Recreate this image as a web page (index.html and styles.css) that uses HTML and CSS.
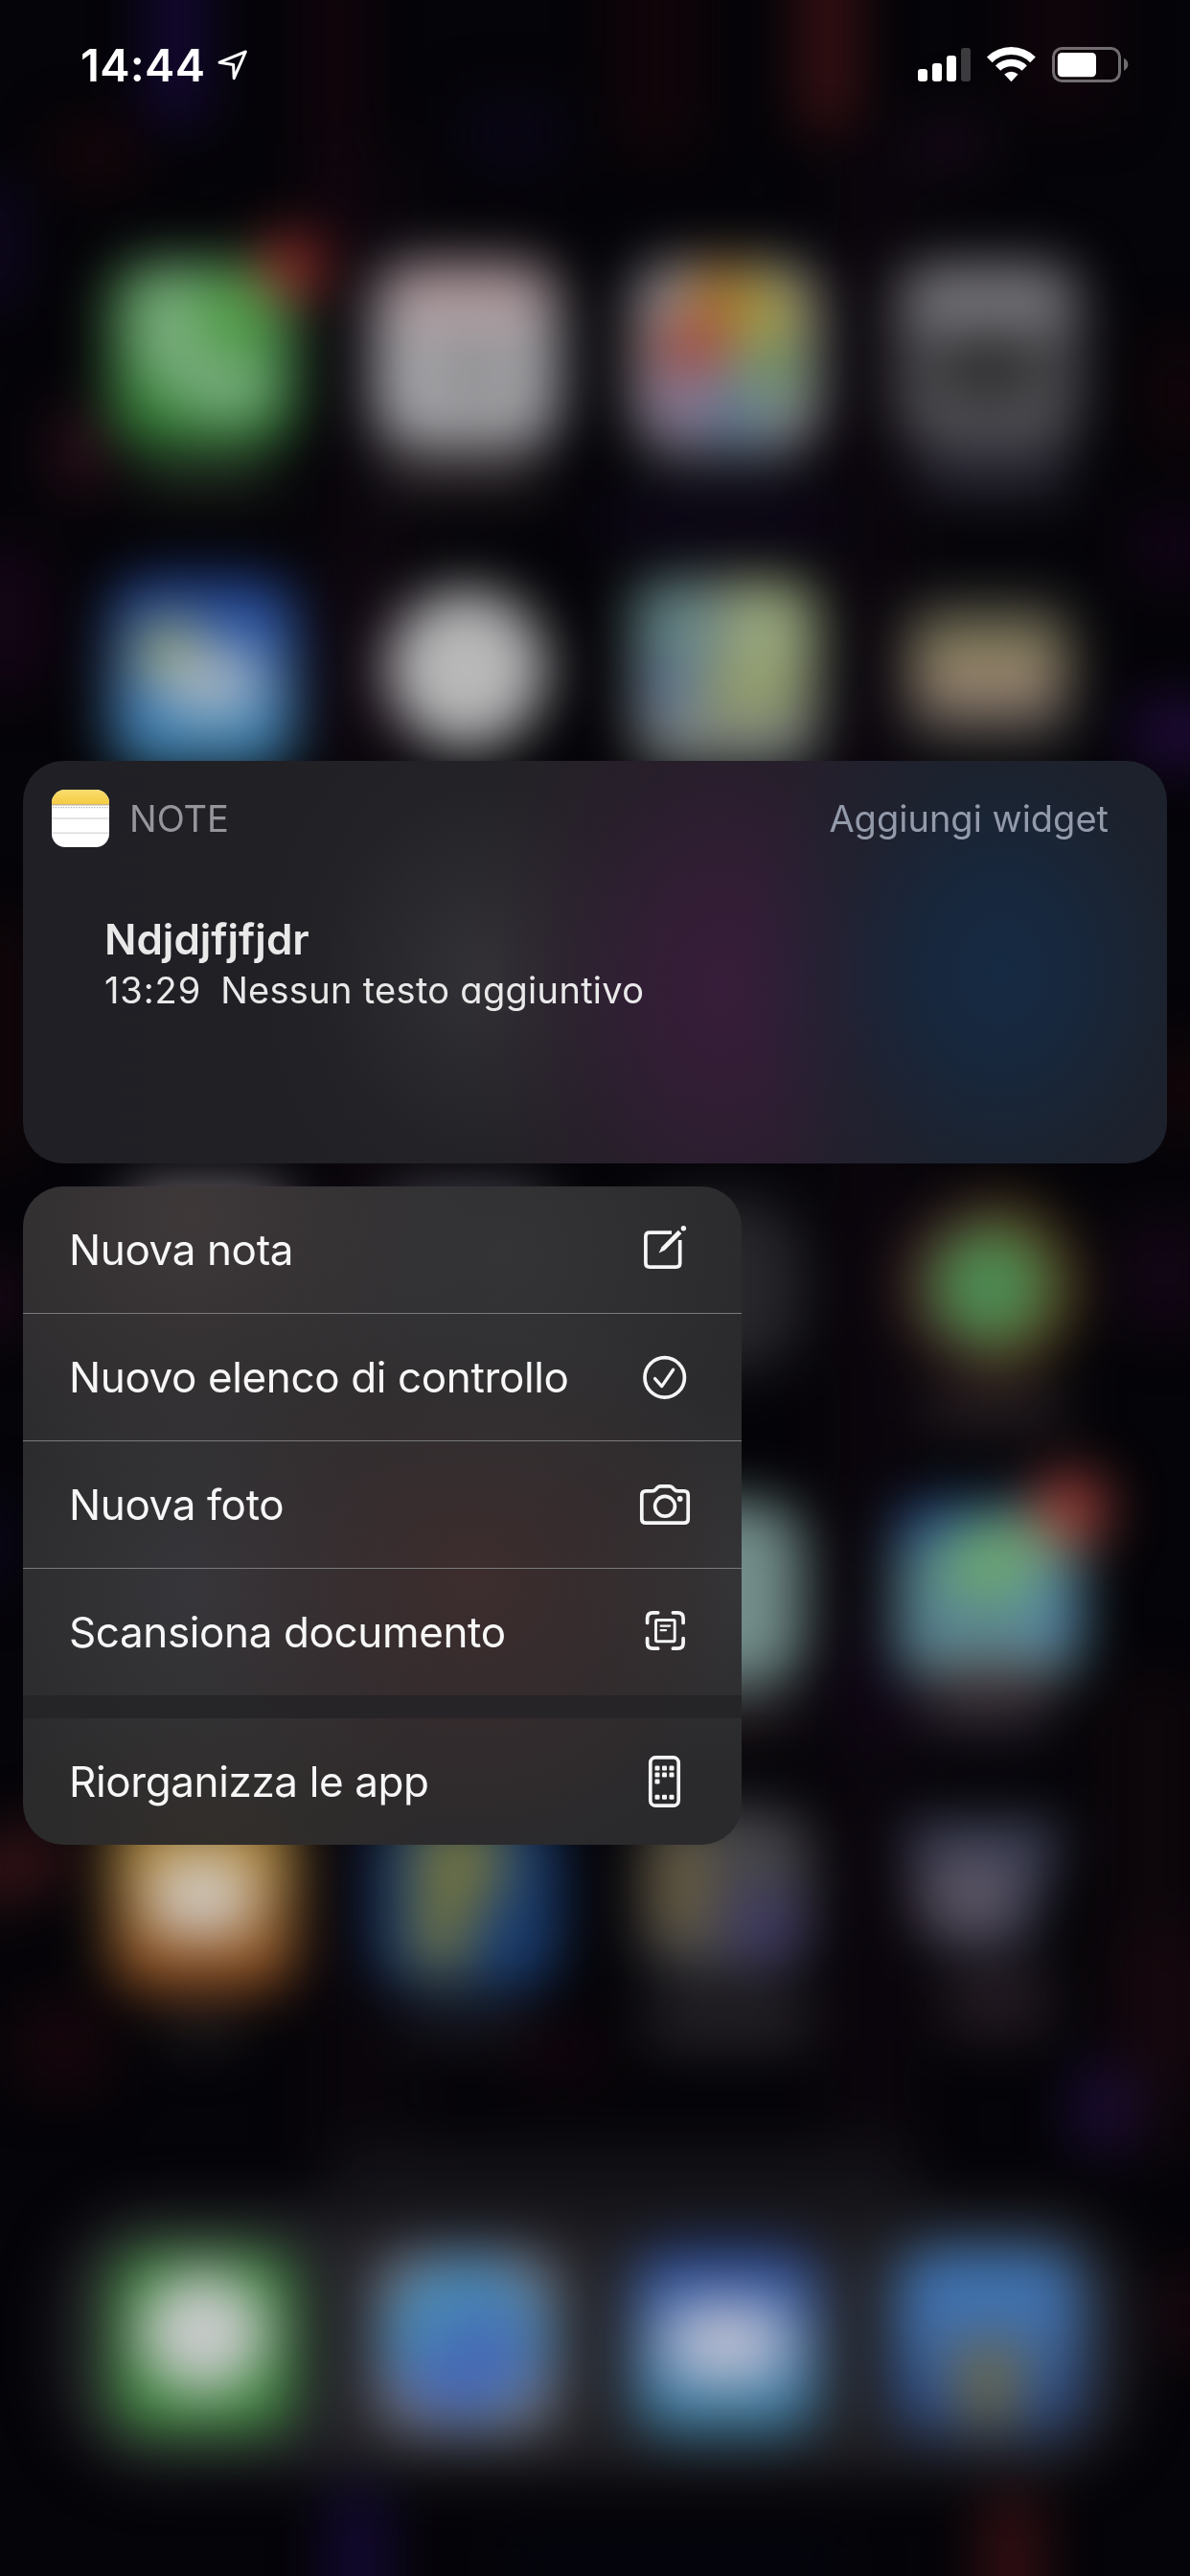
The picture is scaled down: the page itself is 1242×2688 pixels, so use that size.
FILE: index.html
```html
<!DOCTYPE html>
<html lang="it">
<head>
<meta charset="utf-8">
<title>Note</title>
<link rel="stylesheet" href="styles.css">
</head>
<body>
<div class="screen">
  <svg class="wallpaper" viewBox="0 0 1242 2688" aria-hidden="true">
    <defs>
      <filter id="soft" filterUnits="userSpaceOnUse" x="-150" y="-150" width="1542" height="2988" color-interpolation-filters="sRGB"><feGaussianBlur stdDeviation="28"/></filter>
      <linearGradient id="weather" x2="0" y2="1"><stop offset="0" stop-color="#1d3c8c"/><stop offset=".5" stop-color="#3e70b4"/><stop offset="1" stop-color="#3f8ab0"/></linearGradient>
      <linearGradient id="orange" x2="0" y2="1"><stop offset=".2" stop-color="#b0883c"/><stop offset="1" stop-color="#84441c"/></linearGradient>
      <linearGradient id="mail" x2="0" y2="1"><stop offset="0" stop-color="#254290"/><stop offset=".5" stop-color="#5a84b8"/><stop offset="1" stop-color="#327898"/></linearGradient>
      <linearGradient id="phone" x2="0" y2="1"><stop offset="0" stop-color="#5a9a5c"/><stop offset="1" stop-color="#2c7a2e"/></linearGradient>
      <linearGradient id="blue" x2="0" y2="1"><stop offset="0" stop-color="#3d74b2"/><stop offset=".4" stop-color="#4270ac"/><stop offset="1" stop-color="#264078"/></linearGradient>
    </defs>
    <rect width="1242" height="2688" fill="#050408"/>
    <g filter="url(#soft)">
      <!-- wallpaper streaks -->
      <g opacity=".8">
      <rect x="155" y="-100" width="60" height="230" fill="#190b40"/>
      <rect x="325" y="-60" width="50" height="320" fill="#18060e"/>
      <rect x="640" y="-80" width="90" height="240" fill="#14060a"/>
      <rect x="835" y="-100" width="60" height="235" fill="#471417"/>
      <rect x="1060" y="-60" width="100" height="180" fill="#12060c"/>
      <rect x="480" y="100" width="110" height="80" fill="#0a0718"/>
      <rect x="60" y="130" width="80" height="60" fill="#1c070c"/>
      <rect x="950" y="120" width="80" height="60" fill="#1a0a1c"/>
      <rect x="-40" y="190" width="60" height="130" fill="#120828"/>
      <rect x="60" y="430" width="50" height="80" fill="#3a1422"/>
      <rect x="-40" y="570" width="90" height="150" fill="#18061a"/>
      <rect x="1180" y="530" width="90" height="80" fill="#14061a"/>
      <rect x="1180" y="730" width="110" height="70" fill="#230c40"/>
      <rect x="1200" y="350" width="60" height="120" fill="#16060a"/>
      <rect x="620" y="520" width="260" height="50" fill="#10081c"/>
      <rect x="350" y="560" width="60" height="230" fill="#120812"/>
      <rect x="-40" y="960" width="70" height="250" fill="#16070b"/>
      <rect x="1200" y="1090" width="70" height="90" fill="#18080c"/>
      <rect x="-40" y="1320" width="60" height="70" fill="#240a1e"/>
      <rect x="1170" y="1270" width="90" height="120" fill="#170819"/>
      <rect x="-50" y="1560" width="60" height="100" fill="#0a0820"/>
      <rect x="860" y="1700" width="100" height="130" fill="#100717"/>
      <rect x="-40" y="1910" width="110" height="70" fill="#3c161a" transform="rotate(-20 20 1945)"/>
      <rect x="1170" y="2020" width="100" height="150" fill="#16070f"/>
      <rect x="20" y="2090" width="90" height="90" fill="#1c080e"/>
      <rect x="1120" y="2155" width="70" height="90" fill="#210f45"/>
      <rect x="540" y="2110" width="90" height="60" fill="#16060e"/>
      <rect x="340" y="2600" width="68" height="180" fill="#170c3c"/>
      <rect x="1025" y="2605" width="62" height="180" fill="#421317"/>
      <rect x="520" y="2640" width="360" height="80" fill="#04050f"/>
      <rect x="1210" y="2370" width="60" height="90" fill="#1e0a12"/>
      </g>
      <g opacity=".35">
      <rect x="320" y="150" width="120" height="2100" fill="#120a10"/>
      <rect x="860" y="150" width="100" height="2100" fill="#140a14"/>
      <rect x="1150" y="1750" width="110" height="500" fill="#1c0c12"/>
      </g>

      <!-- dock -->
      <rect x="62" y="2304" width="1118" height="276" rx="100" fill="#222227"/>
      <rect x="340" y="2240" width="620" height="90" rx="40" fill="#141318"/>

      <!-- row 1 -->
      <rect x="145" y="470" width="140" height="45" fill="#20281f"/>
      <rect x="116" y="274" width="192" height="192" rx="40" fill="url(#phone)"/>
      <ellipse cx="180" cy="345" rx="38" ry="62" fill="#7cae80"/><ellipse cx="235" cy="405" rx="54" ry="34" fill="#79ac7e"/>
      <ellipse cx="240" cy="330" rx="34" ry="45" fill="#4e9c45"/>
      <circle cx="304" cy="279" r="36" fill="#8c2c27"/>
      <rect x="400" y="470" width="165" height="45" fill="#2c2629"/>
      <rect x="391" y="274" width="192" height="192" rx="40" fill="#a6a6aa"/>
      <rect x="400" y="274" width="176" height="66" rx="30" fill="#ae999d"/><ellipse cx="495" cy="390" rx="50" ry="35" fill="#909093"/>
      <rect x="670" y="470" width="170" height="30" fill="#202028"/>
      <rect x="662" y="274" width="192" height="192" rx="40" fill="#99979e"/>
      <ellipse cx="755" cy="317" rx="38" ry="40" fill="#ab7020"/><ellipse cx="802" cy="330" rx="34" ry="44" fill="#a09a44"/>
      <ellipse cx="722" cy="362" rx="40" ry="34" fill="#a0483d"/><ellipse cx="805" cy="390" rx="34" ry="34" fill="#689060"/>
      <ellipse cx="718" cy="420" rx="40" ry="36" fill="#84708f"/><ellipse cx="770" cy="435" rx="34" ry="34" fill="#5f7a94"/>
      <rect x="960" y="460" width="155" height="60" fill="#262430"/>
      <rect x="936" y="274" width="192" height="192" rx="40" fill="#515155"/>
      <rect x="940" y="276" width="184" height="66" rx="30" fill="#77767b"/><ellipse cx="1032" cy="382" rx="60" ry="34" fill="#2c2c2e"/>

      <!-- row 2 -->
      <rect x="116" y="602" width="192" height="200" rx="40" fill="url(#weather)"/>
      <circle cx="178" cy="682" r="36" fill="#98a262"/><ellipse cx="220" cy="712" rx="56" ry="38" fill="#a4b4c2"/>
      <circle cx="487" cy="698" r="83" fill="#b8b8b9"/>
      <rect x="662" y="604" width="192" height="196" rx="40" fill="#7c8280"/>
      <rect x="662" y="606" width="80" height="90" rx="20" fill="#638486"/><rect x="755" y="608" width="95" height="105" rx="20" fill="#97a67c"/>
      <rect x="675" y="690" width="55" height="60" fill="#5c7494"/><rect x="735" y="700" width="100" height="50" fill="#929c67"/>
      <rect x="942" y="622" width="180" height="160" rx="40" fill="#353535"/>
      <rect x="955" y="650" width="155" height="60" fill="#827c58"/><rect x="958" y="692" width="148" height="50" fill="#9c8673"/>

      <!-- row 3 -->
      <rect x="125" y="1234" width="180" height="190" rx="40" fill="#6b686e"/>
      <rect x="400" y="1234" width="175" height="190" rx="40" fill="#403f47"/>
      <rect x="662" y="1250" width="175" height="180" rx="60" fill="#27272b"/>
      <circle cx="1033" cy="1342" r="93" fill="#482a26"/><path d="M1033 1249a93 93 0 0 1 0 186Z" fill="#573c20"/>
      <circle cx="1033" cy="1342" r="60" fill="#4e8e4a"/><circle cx="1036" cy="1344" r="27" fill="#4c8860"/>
      <rect x="965" y="1450" width="145" height="40" fill="#2b2226"/>

      <!-- row 5 -->
      <rect x="650" y="1567" width="188" height="192" rx="44" fill="#728d8a"/>
      <rect x="720" y="1770" width="110" height="35" fill="#2d2328"/>
      <rect x="936" y="1567" width="192" height="190" rx="40" fill="#588594"/>
      <rect x="940" y="1568" width="130" height="52" rx="24" fill="#2c5690"/><ellipse cx="1050" cy="1630" rx="74" ry="46" fill="#6ca672"/>
      <rect x="1075" y="1630" width="48" height="90" fill="#5687a8"/>
      <circle cx="1117" cy="1575" r="40" fill="#9a3d38"/>
      <rect x="970" y="1734" width="130" height="26" fill="#605048"/><rect x="965" y="1767" width="130" height="42" fill="#2f2633"/>

      <!-- row 6 -->
      <rect x="116" y="1887" width="192" height="192" rx="40" fill="url(#orange)"/>
      <rect x="155" y="1937" width="110" height="84" rx="30" fill="#d0c8be"/>
      <rect x="170" y="2100" width="80" height="32" fill="#242023"/>
      <rect x="391" y="1887" width="192" height="188" rx="44" fill="#1a3d70"/>
      <path d="M430 1900H525V1970L490 2005V2055H432Z" fill="#6f7243"/>
      <rect x="420" y="2095" width="130" height="35" fill="#1c1c24"/>
      <rect x="670" y="1887" width="175" height="173" rx="40" fill="#46464b"/>
      <rect x="682" y="1910" width="55" height="110" fill="#6a5e40"/><rect x="765" y="1980" width="65" height="62" fill="#3c3668"/>
      <rect x="675" y="2085" width="170" height="50" fill="#29252a"/>
      <path d="M945 1900H1110L1070 2030H970Z" fill="#41445a"/><ellipse cx="1010" cy="1982" rx="55" ry="38" fill="#5c5563"/>
      <rect x="985" y="2050" width="110" height="75" fill="#241b23"/>

      <!-- dock icons -->
      <rect x="116" y="2347" width="192" height="192" rx="40" fill="#40883f"/>
      <ellipse cx="212" cy="2434" rx="66" ry="62" fill="#c8cbcb"/>
      <rect x="391" y="2347" width="192" height="192" rx="40" fill="#74757f"/>
      <circle cx="487" cy="2440" r="84" fill="#4687b5"/><path d="M487 2524a84 84 0 0 1-75-46L520 2402 560 2482Z" fill="#4668b5"/>
      <rect x="662" y="2347" width="192" height="192" rx="40" fill="url(#mail)"/>
      <rect x="700" y="2404" width="116" height="82" rx="26" fill="#b9bed2"/>
      <rect x="936" y="2347" width="192" height="192" rx="40" fill="url(#blue)"/>
      <path d="M990 2445H1075L1058 2530H1006Z" fill="#68684e"/>
    </g>
  </svg>

  <header class="status">
    <div class="clock">
      <span class="time">14:44</span>
      <svg class="locator" width="34" height="36" viewBox="156 21 34 36"><path d="M159 35.2 186.3 24 174.2 51.6 173.6 37.6Z" fill="none" stroke="#fff" stroke-width="3" stroke-linejoin="round"/></svg>
    </div>
    <svg class="indicators" width="222" height="40" viewBox="17 18 222 40" fill="#fff">
      <rect x="18" y="42" width="10" height="13" rx="3"/><rect x="33" y="36" width="10" height="19" rx="3"/>
      <rect x="48" y="28" width="10" height="27" rx="3"/><rect x="63" y="20" width="10" height="35" rx="3" opacity=".22"/>
      <path d="M92.8 32.4A32 32 0 0 1 138 32.4" fill="none" stroke="#fff" stroke-width="8"/>
      <path d="M101.6 41.2A19.5 19.5 0 0 1 129.2 41.2" fill="none" stroke="#fff" stroke-width="7.4"/>
      <path d="M108.2 47.6Q115.4 41.7 122.6 47.6L115.4 55.2Z"/>
      <rect x="159.5" y="20.5" width="69" height="34" rx="9" fill="none" stroke="#fff" stroke-opacity=".42" stroke-width="3"/>
      <rect x="163.8" y="25" width="40.2" height="25.2" rx="4.5"/>
      <path d="M233 30.7Q237.3 33 237.3 37.2T233 43.7Z" opacity=".42"/>
    </svg>
  </header>

  <main class="preview">
    <section class="widget">
      <div class="widget-head">
        <svg class="app-icon" width="60" height="60" viewBox="0 0 60 60">
          <defs><linearGradient id="pad" x2="0" y2="1"><stop stop-color="#fbdd70"/><stop offset="1" stop-color="#f4cb40"/></linearGradient><clipPath id="tile"><rect width="60" height="60" rx="14"/></clipPath></defs>
          <g clip-path="url(#tile)"><rect width="60" height="60" fill="#fff"/><rect width="60" height="15.5" fill="url(#pad)"/>
          <rect y="15.2" width="60" height="1.2" fill="#b5a98c"/><path d="M1 18.6H60" stroke="#b4b4b6" stroke-width="1.3" stroke-dasharray="1.3 1.4"/>
          <path d="M0 30H60M0 45.3H60" stroke="#dcdcde" stroke-width="1.6"/></g>
        </svg>
        <span class="app-name">NOTE</span>
        <span class="add">Aggiungi widget</span>
      </div>
      <div class="note">
        <div class="note-title">Ndjdjfjfjdr</div>
        <div class="note-line"><span class="note-time">13:29</span><span class="note-body">Nessun testo aggiuntivo</span></div>
      </div>
    </section>

    <nav class="menu">
      <div class="item"><span>Nuova nota</span>
        <svg class="icon" viewBox="0 0 60 60"><path d="M37 12.2H14Q9.9 12.2 9.9 16.3V44Q9.9 48.1 14 48.1H41.6Q45.7 48.1 45.7 44V20" stroke-linecap="butt"/><path class="solid" d="M23.6 33.6 26.6 27.2 43.8 9.8 47.4 13.2 30 30.6Z"/><circle class="solid" cx="49.4" cy="7.8" r="2.7"/></svg></div>
      <div class="item"><span>Nuovo elenco di controllo</span>
        <svg class="icon" viewBox="0 0 60 60"><circle cx="29.7" cy="30.4" r="20.7"/><path d="M19.6 31.6 26.7 39.6 38.6 22.2" stroke-width="3.3"/></svg></div>
      <div class="item"><span>Nuova foto</span>
        <svg class="icon" viewBox="0 0 60 60"><path d="M10 15.9H16.5Q19 15.9 20.6 14L22.2 12.2Q23.5 10.8 25.5 10.8H34.5Q36.5 10.8 37.8 12.2L39.4 14Q41 15.9 43.5 15.9H50Q54.2 15.9 54.2 20.1V45Q54.2 49.2 50 49.2H10Q5.8 49.2 5.8 45V20.1Q5.8 15.9 10 15.9Z"/><circle cx="30" cy="31.8" r="10.4"/><circle class="solid" cx="45.7" cy="24" r="2.9"/></svg></div>
      <div class="item last-of-group"><span>Scansiona documento</span>
        <svg class="icon" viewBox="0 0 60 60"><path d="M11.6 20.5V15.5Q11.6 9.8 17.3 9.8H22.7M38.4 9.8H43.4Q49.1 9.8 49.1 15.5V20.5M11.6 36.5V41.5Q11.6 47.2 17.3 47.2H22.7M38.4 47.2H43.4Q49.1 47.2 49.1 41.5V36.5"/><rect x="20.5" y="17.5" width="19.7" height="22.3" rx="1" stroke-width="2.9"/><path d="M25.6 23.6H35.2M25.6 28.2H31" stroke-width="2.2"/></svg></div>
      <div class="item"><span>Riorganizza le app</span>
        <svg class="icon" viewBox="0 0 60 60"><rect x="14.8" y="4.9" width="29.4" height="50.3" rx="5.5"/><g class="solid"><rect x="19.5" y="13.5" width="5" height="5" rx="1.3"/><rect x="27" y="13.5" width="5" height="5" rx="1.3"/><rect x="34.5" y="13.5" width="5" height="5" rx="1.3"/><rect x="19.5" y="20.5" width="5" height="5" rx="1.3"/><rect x="27" y="20.5" width="5" height="5" rx="1.3"/><rect x="34.5" y="20.5" width="5" height="5" rx="1.3"/><rect x="19.5" y="27.5" width="5" height="5" rx="1.3"/><rect x="19.5" y="43.8" width="5" height="5" rx="1.3"/><rect x="27" y="43.8" width="5" height="5" rx="1.3"/><rect x="34.5" y="43.8" width="5" height="5" rx="1.3"/></g></svg></div>
    </nav>
  </main>
</div>
</body>
</html>
```
FILE: styles.css
```css
* { box-sizing: border-box; }
body {
  margin: 0;
  background: #050408;
  font-family: Inter, "Liberation Sans", sans-serif;
  color: #f4f4f4;
}
.screen {
  position: relative;
  width: 1242px;
  height: 2688px;
  overflow: hidden;
}
.wallpaper {
  position: absolute;
  inset: 0;
  width: 1242px;
  height: 2688px;
}
.status {
  position: relative;
  display: flex;
  justify-content: space-between;
  align-items: flex-start;
  height: 794px;
  padding: 48px 63px 0 84px;
  color: #fff;
}
.clock {
  display: flex;
  align-items: flex-start;
  gap: 13px;
}
.time {
  width: 129px;
  font-size: 47px;
  font-weight: 600;
  line-height: 40px;
  letter-spacing: .3px;
  white-space: nowrap;
}
.locator { margin-top: 3px; }
.preview {
  position: relative;
  display: flex;
  flex-direction: column;
  align-items: flex-start;
  gap: 24px;
  padding: 0 24px;
}
.widget {
  width: 1194px;
  height: 420px;
  padding: 30px 61px 0 30px;
  border-radius: 42px;
  background:
    radial-gradient(ellipse 270px 330px at 1020px 220px, #162a43, rgba(22, 40, 63, .85) 30%, rgba(24, 37, 53, .4) 65%, rgba(27, 32, 44, 0)),
    radial-gradient(ellipse 270px 380px at 730px 236px, #371d39, rgba(52, 29, 55, .85) 28%, rgba(46, 29, 49, .4) 62%, rgba(42, 28, 44, 0)),
    radial-gradient(ellipse 250px 270px at 485px 220px, #333236, rgba(46, 45, 49, .7) 35%, rgba(40, 39, 43, .25) 70%, rgba(37, 36, 40, 0)),
    linear-gradient(90deg, #201f25 0%, #222125 40%, #241f28 60%, #1f2029 80%, #1e2029 100%);
}
.widget-head {
  display: flex;
  align-items: center;
  height: 60px;
  font-size: 38px;
  line-height: 60px;
}
.app-name {
  margin-left: 21px;
  color: #96959c;
}
.add {
  margin-left: auto;
  color: #939aaa;
}
.note {
  padding: 69px 0 0 55px;
  color: #eae9ea;
}
.note-title {
  font-size: 44px;
  font-weight: 600;
  line-height: 54px;
}
.note-line {
  display: flex;
  gap: 20px;
  font-size: 38px;
  line-height: 52px;
  letter-spacing: .3px;
  font-feature-settings: "cv11";
}
.note-time { letter-spacing: .9px; }
.menu {
  width: 750px;
  border-radius: 42px;
  overflow: hidden;
  background:
    radial-gradient(circle 300px at 176px 30px, #3e3839, rgba(62, 56, 57, 0)),
    radial-gradient(circle 280px at 500px 70px, #343436, rgba(52, 52, 54, 0)),
    radial-gradient(circle 300px at 470px 410px, #3d2d2e, rgba(61, 45, 46, 0)),
    radial-gradient(circle 260px at 190px 420px, #37363a, rgba(55, 54, 58, 0)),
    radial-gradient(circle 200px at 760px 410px, #343537, rgba(52, 53, 55, 0)),
    radial-gradient(circle 220px at 200px 690px, #322e2a, rgba(50, 46, 42, 0)),
    #2a2a2c;
}
.item {
  display: flex;
  align-items: center;
  justify-content: space-between;
  height: 133px;
  padding: 0 50px 0 48px;
  border-bottom: 1px solid #7a7a7c;
  color: #f7f7f7;
  font-size: 44px;
  letter-spacing: -.38px;
  line-height: 54px;
  white-space: nowrap;
}
.item.last-of-group {
  height: 156px;
  border-bottom: 24px solid rgba(36, 35, 37, .88);
}
.item:last-child {
  height: 132px;
  border-bottom: 0;
}
.icon {
  width: 60px;
  height: 60px;
  fill: none;
  stroke: #f5f5f6;
  stroke-width: 3.7;
  stroke-linecap: round;
  stroke-linejoin: round;
}
.solid {
  fill: #f5f5f6;
  stroke: none;
}
```
